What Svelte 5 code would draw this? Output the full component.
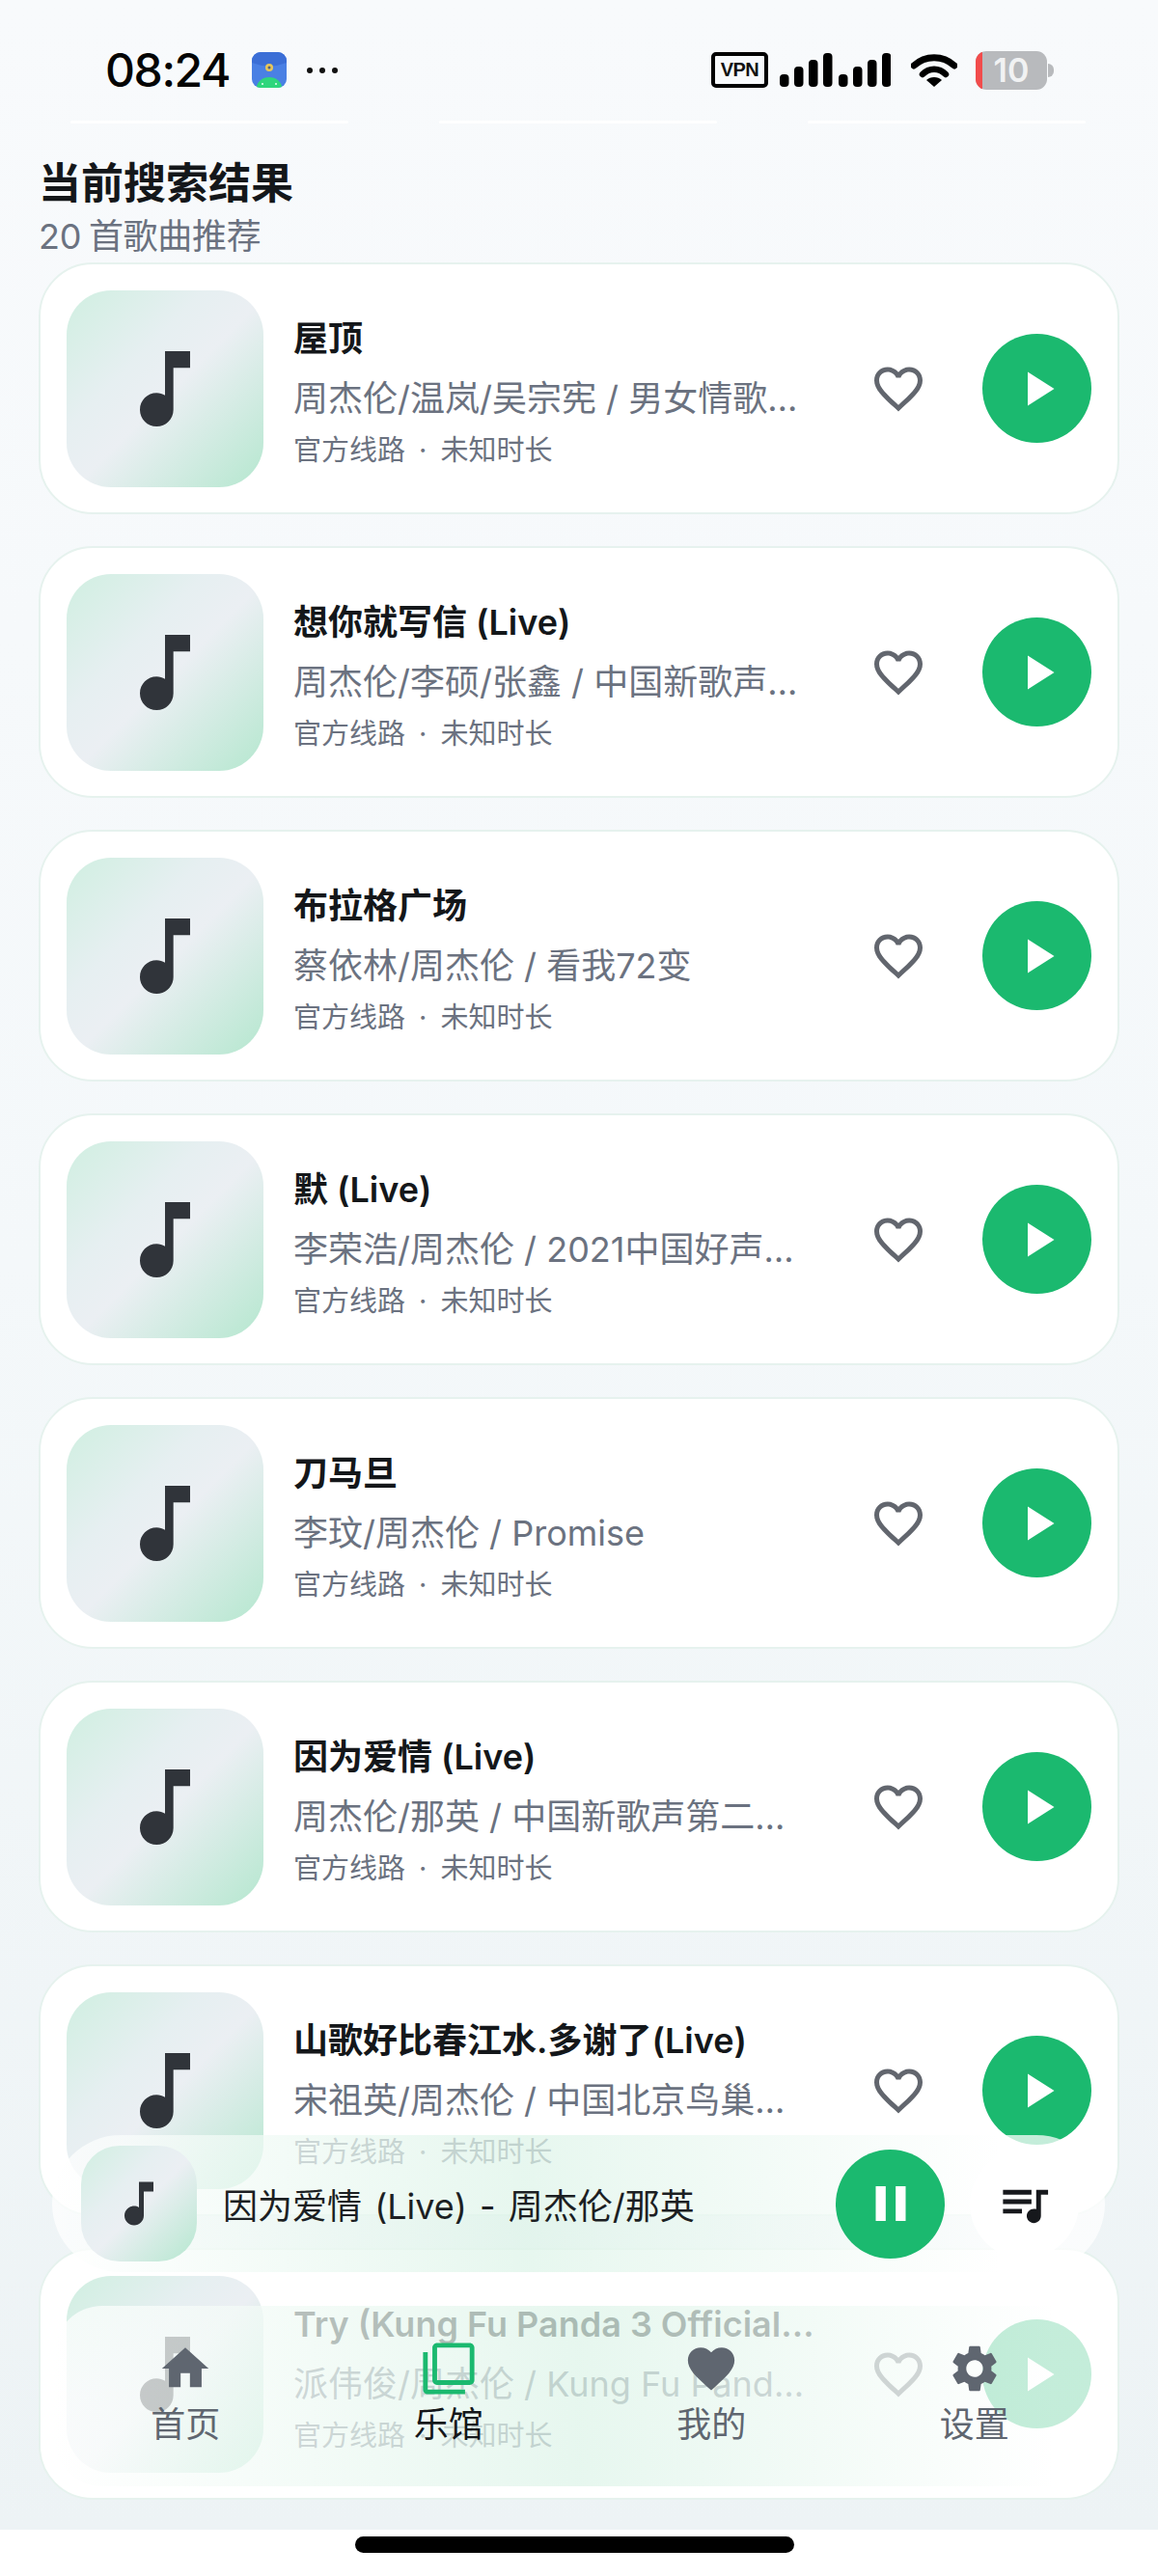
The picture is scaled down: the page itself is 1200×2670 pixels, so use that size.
<script lang="ts">
	const songs = [
		{ title: '屋顶', sub: '周杰伦/温岚/吴宗宪 / 男女情歌对唱冠军全记录' },
		{ title: '想你就写信 (Live)', sub: '周杰伦/李硕/张鑫 / 中国新歌声第二季第一期' },
		{ title: '布拉格广场', sub: '蔡依林/周杰伦 / 看我72变' },
		{ title: '默 (Live)', sub: '李荣浩/周杰伦 / 2021中国好声音第一期现场' },
		{ title: '刀马旦', sub: '李玟/周杰伦 / Promise' },
		{ title: '因为爱情 (Live)', sub: '周杰伦/那英 / 中国新歌声第二季第五期现场' },
		{ title: '山歌好比春江水.多谢了(Live)', sub: '宋祖英/周杰伦 / 中国北京鸟巢演唱会现场' },
		{ title: 'Try (Kung Fu Panda 3 Official Theme Song)', sub: '派伟俊/周杰伦 / Kung Fu Panda 3 Soundtrack' }
	];

	const note = 'M12 3v10.55c-.59-.34-1.27-.55-2-.55-2.21 0-4 1.79-4 4s1.79 4 4 4 4-1.79 4-4V7h4V3h-6z';
	const heartOutline =
		'M16.5 3c-1.74 0-3.41.81-4.5 2.09C10.91 3.81 9.24 3 7.5 3 4.42 3 2 5.42 2 8.5c0 3.78 3.4 6.86 8.55 11.54L12 21.35l1.45-1.32C18.6 15.36 22 12.28 22 8.5 22 5.42 19.58 3 16.5 3zm-4.4 15.55l-.1.1-.1-.1C7.14 14.24 4 11.39 4 8.5 4 6.5 5.5 5 7.5 5c1.54 0 3.04.99 3.57 2.36h1.87C13.46 5.99 14.96 5 16.5 5c2 0 3.5 1.5 3.5 3.5 0 2.89-3.14 5.74-7.9 10.05z';

	const tabs = [
		{ label: '首页', d: 'M10 20v-6h4v6h5v-8h3L12 3 2 12h3v8z' },
		{
			label: '乐馆',
			active: true,
			d: 'M3 5H1v16c0 1.1.9 2 2 2h16v-2H3V5zm18-4H7c-1.1 0-2 .9-2 2v14c0 1.1.9 2 2 2h14c1.1 0 2-.9 2-2V3c0-1.1-.9-2-2-2zm0 16H7V3h14v14z'
		},
		{
			label: '我的',
			d: 'M12 21.35l-1.45-1.32C5.4 15.36 2 12.28 2 8.5 2 5.42 4.42 3 7.5 3c1.74 0 3.41.81 4.5 2.09C13.09 3.81 14.76 3 16.5 3 19.58 3 22 5.42 22 8.5c0 3.78-3.4 6.86-8.55 11.54L12 21.35z'
		},
		{
			label: '设置',
			d: 'M19.14 12.94c.04-.3.06-.61.06-.94 0-.32-.02-.64-.07-.94l2.03-1.58c.18-.14.23-.41.12-.61l-1.92-3.32c-.12-.22-.37-.29-.59-.22l-2.39.96c-.5-.38-1.03-.7-1.62-.94l-.36-2.54c-.04-.24-.24-.41-.48-.41h-3.84c-.24 0-.43.17-.47.41l-.36 2.54c-.59.24-1.13.57-1.62.94l-2.39-.96c-.22-.08-.47 0-.59.22L2.74 8.87c-.12.21-.08.47.12.61l2.03 1.58c-.05.3-.09.63-.09.94s.02.64.07.94l-2.03 1.58c-.18.14-.23.41-.12.61l1.92 3.32c.12.22.37.29.59.22l2.39-.96c.5.38 1.03.7 1.62.94l.36 2.54c.05.24.24.41.48.41h3.84c.24 0 .44-.17.47-.41l.36-2.54c.59-.24 1.13-.56 1.62-.94l2.39.96c.22.08.47 0 .59-.22l1.92-3.32c.12-.22.07-.47-.12-.61l-2.01-1.58zM12 15.6c-1.98 0-3.6-1.62-3.6-3.6s1.62-3.6 3.6-3.6 3.6 1.62 3.6 3.6-1.62 3.6-3.6 3.6z'
		}
	];

	// x, top, height of each signal bar
	const bars = [
		[0, 22, 13], [15, 14, 21], [30, 7, 28], [45, 0, 35],
		[61, 22, 13], [76, 14, 21], [91, 7, 28], [106, 0, 35]
	];
</script>

<div class="page">
	<div class="screen">
		<div class="status">
			<div class="status-left">
				<span class="time">08:24</span>
				<svg class="app-icon" viewBox="0 0 36 37" width="36" height="37">
					<defs>
						<clipPath id="appclip"><rect width="36" height="37" rx="9" /></clipPath>
					</defs>
					<g clip-path="url(#appclip)">
						<rect width="36" height="37" fill="#4a80e4" />
						<path d="M0 0h36v11q-18 7-36 0z" fill="#3b6ed6" />
						<circle cx="18" cy="16" r="4" fill="#e7c65a" />
						<circle cx="18" cy="16" r="1.5" fill="#51607f" />
						<ellipse cx="18" cy="37" rx="13" ry="11" fill="#2fd67c" />
						<circle cx="11" cy="33" r="1" fill="#e8fff2" />
						<circle cx="25" cy="33" r="1" fill="#e8fff2" />
					</g>
				</svg>
				<span class="dots"><i></i><i></i><i></i></span>
			</div>
			<div class="status-right">
				<span class="vpn">VPN</span>
				<svg class="signal" width="115" height="36" viewBox="0 0 115 36">
					{#each bars as b}
						<rect x={b[0]} y={b[1]} width="9.5" height={b[2]} rx="4" fill="#000" />
					{/each}
				</svg>
				<svg class="wifi" width="48" height="36" viewBox="0 0 48 36">
					<path d="M3 13C15 2 33 2 45 13" fill="none" stroke="#000" stroke-width="7" stroke-linecap="round" />
					<path d="M12 22C19 15 29 15 36 22" fill="none" stroke="#000" stroke-width="6.5" stroke-linecap="round" />
					<path d="M24 35L16 28C20 24 28 24 32 28z" fill="#000" />
				</svg>
				<div class="battery">
					<div class="battery-body"><span class="battery-low"></span><span class="battery-num">10</span></div>
					<span class="battery-nub"></span>
				</div>
			</div>
		</div>
		<div class="hairlines"><span></span><span></span><span></span></div>

		<header class="head">
			<h1>当前搜索结果</h1>
			<p>20 首歌曲推荐</p>
		</header>

		<div class="list">
			{#each songs as song}
				<div class="card">
					<div class="cover">
						<svg width="104" height="104" viewBox="0 0 24 24"><path d={note} fill="#30343a" /></svg>
					</div>
					<div class="info">
						<div class="title">{song.title}</div>
						<div class="sub">{song.sub}</div>
						<div class="meta"><span>官方线路</span><span>·</span><span>未知时长</span></div>
					</div>
					<svg class="heart" width="60" height="60" viewBox="0 0 24 24"><path d={heartOutline} fill="#62666e" /></svg>
					<button class="play" aria-label="播放">
						<svg width="60" height="60" viewBox="0 0 24 24"><path d="M8 5v14l11-7z" fill="#fff" /></svg>
					</button>
				</div>
			{/each}
		</div>
	</div>

	<div class="player">
		<div class="player-cover">
			<svg width="60" height="60" viewBox="0 0 24 24"><path d={note} fill="#30343a" /></svg>
		</div>
		<div class="player-title">因为爱情 (Live) - 周杰伦/那英</div>
		<button class="play" aria-label="暂停">
			<svg width="62" height="62" viewBox="0 0 24 24"><path d="M6 19h4V5H6v14zm8-14v14h4V5h-4z" fill="#fff" /></svg>
		</button>
		<button class="queue" aria-label="播放列表">
			<svg width="59" height="59" viewBox="0 0 24 24">
				<path d="M15 6H3v2h12V6zm0 4H3v2h12v-2zM3 16h8v-2H3v2zM17 6v8.18c-.31-.11-.65-.18-1-.18-1.66 0-3 1.34-3 3s1.34 3 3 3 3-1.34 3-3V8h3V6h-5z" fill="#16181c" />
			</svg>
		</button>
	</div>

	<nav class="tabs">
		{#each tabs as tab}
			<div class="tab" class:active={tab.active}>
				<svg width="58" height="58" viewBox="0 0 24 24"><path d={tab.d} /></svg>
				<span>{tab.label}</span>
			</div>
		{/each}
	</nav>

	<div class="home-bar"><span></span></div>
</div>

<style>
	:global(body) {
		margin: 0;
		background: #fff;
	}

	.page {
		position: relative;
		width: 1200px;
		height: 2670px;
		overflow: hidden;
		background: #fff;
		font-family: Inter, 'Noto Sans CJK SC', sans-serif;
	}

	.screen {
		height: 2622px;
		overflow: hidden;
		background: linear-gradient(180deg, #f8fafc 0%, #f4f8fa 50%, #edf3f5 100%);
	}

	.status {
		display: flex;
		justify-content: space-between;
		align-items: center;
		box-sizing: border-box;
		height: 125px;
		padding: 20px 108px 0 109px;
	}

	.status-left,
	.status-right {
		display: flex;
		align-items: center;
	}

	.time {
		width: 129px;
		font-size: 48px;
		font-weight: 500;
		color: #050505;
		letter-spacing: -1.4px;
		white-space: nowrap;
	}

	.app-icon {
		margin-left: 23px;
	}

	.dots {
		display: flex;
		gap: 7px;
		margin-left: 21px;
	}

	.dots i {
		width: 6px;
		height: 6px;
		border-radius: 50%;
		background: #111;
	}

	.vpn {
		box-sizing: border-box;
		width: 59px;
		height: 37px;
		border: 4px solid #000;
		border-radius: 5px;
		font-size: 20px;
		font-weight: 700;
		line-height: 29px;
		text-align: center;
		letter-spacing: -0.5px;
		color: #111;
		font-family: 'Liberation Sans', sans-serif;
	}

	.signal {
		margin-left: 12px;
	}

	.wifi {
		margin-left: 21px;
	}

	.battery {
		display: flex;
		align-items: center;
		margin-left: 19px;
	}

	.battery-body {
		position: relative;
		display: flex;
		justify-content: center;
		align-items: center;
		width: 74px;
		height: 40px;
		border-radius: 11px;
		overflow: hidden;
		background: #b8babd;
	}

	.battery-low {
		position: absolute;
		left: 0;
		top: 0;
		bottom: 0;
		width: 7px;
		background: #f24c4c;
	}

	.battery-num {
		font-size: 34px;
		font-weight: 600;
		color: #f1f2f3;
	}

	.battery-nub {
		width: 6px;
		height: 14px;
		margin-left: 1px;
		border-radius: 0 7px 7px 0;
		background: #b8babd;
	}

	.hairlines {
		display: flex;
		justify-content: space-between;
		height: 35px;
		padding: 0 75px 0 73px;
	}

	.hairlines span {
		width: 288px;
		height: 3px;
		border-radius: 2px;
		background: #fff;
	}

	.head {
		height: 112px;
		padding: 0 40px;
	}

	h1 {
		margin: 0;
		font-size: 44px;
		font-weight: 700;
		line-height: 60px;
		color: #14171a;
	}

	.head p {
		margin: 0;
		font-size: 36px;
		line-height: 50px;
		word-spacing: -2px;
		letter-spacing: -0.3px;
		color: #6b7280;
	}

	.list {
		display: flex;
		flex-direction: column;
		gap: 33px;
		padding: 0 40px;
	}

	.card {
		box-sizing: border-box;
		display: flex;
		align-items: center;
		flex: none;
		height: 261px;
		padding: 0 27px;
		border: 2px solid #e6f2ee;
		border-radius: 56px;
		background: #fff;
	}

	.cover {
		display: flex;
		justify-content: center;
		align-items: center;
		flex: none;
		width: 204px;
		height: 204px;
		border-radius: 46px;
		background: linear-gradient(135deg, #d0efe1 0%, #e6eff1 35%, #ebeff3 52%, #b5e7cf 100%);
	}

	.info {
		flex: 1;
		min-width: 0;
		margin: 0 56px 0 31px;
		padding-top: 7px;
	}

	.title,
	.sub {
		white-space: nowrap;
		overflow: hidden;
		text-overflow: ellipsis;
	}

	.title {
		font-size: 36px;
		font-weight: 600;
		line-height: 50px;
		color: #14171a;
	}

	.sub {
		margin-top: 12px;
		font-size: 36px;
		line-height: 50px;
		color: #6b7280;
	}

	.meta {
		display: flex;
		gap: 14px;
		margin-top: 10px;
		font-size: 29px;
		line-height: 38px;
		color: #6b7280;
	}

	.heart {
		flex: none;
		margin-right: 57px;
	}

	.play,
	.queue {
		display: flex;
		justify-content: center;
		align-items: center;
		flex: none;
		width: 113px;
		height: 113px;
		padding: 0;
		border: none;
		border-radius: 50%;
		background: #1bb96f;
	}

	.player {
		position: absolute;
		left: 54px;
		top: 2213px;
		display: flex;
		align-items: center;
		box-sizing: border-box;
		width: 1091px;
		height: 142px;
		padding: 0 27px 0 30px;
		border-radius: 71px;
		background: linear-gradient(90deg, rgba(255, 255, 255, 0.74) 0%, rgba(222, 244, 233, 0.74) 45%, rgba(255, 255, 255, 0.74) 90%);
	}

	.player-cover {
		display: flex;
		justify-content: center;
		align-items: center;
		flex: none;
		width: 120px;
		height: 120px;
		border-radius: 40px;
		background: linear-gradient(135deg, #d0efe1 0%, #e6eff1 35%, #ebeff3 52%, #b5e7cf 100%);
	}

	.player-title {
		flex: 1;
		min-width: 0;
		margin-left: 27px;
		font-size: 36px;
		word-spacing: 3px;
		color: #1c1f23;
		white-space: nowrap;
	}

	.queue {
		margin-left: 26px;
		background: rgba(255, 255, 255, 0.9);
	}

	.tabs {
		position: absolute;
		left: 56px;
		top: 2390px;
		display: grid;
		grid-template-columns: repeat(4, 1fr);
		width: 1090px;
		height: 187px;
		border-radius: 50px;
		background: linear-gradient(90deg, rgba(255, 255, 255, 0.74) 0%, rgba(222, 244, 233, 0.74) 50%, rgba(255, 255, 255, 0.74) 95%);
	}

	.tab {
		display: flex;
		flex-direction: column;
		align-items: center;
		padding-top: 36px;
		font-size: 36px;
		line-height: 50px;
		color: #5f6670;
	}

	.tab svg {
		fill: #5f6670;
		margin-bottom: 4px;
	}

	.tab.active {
		color: #14171a;
	}

	.tab.active svg {
		fill: #1bb96f;
	}

	.home-bar {
		display: flex;
		justify-content: center;
		padding: 7px 9px 0 0;
	}

	.home-bar span {
		width: 455px;
		height: 17px;
		border-radius: 9px;
		background: #000;
	}
</style>
